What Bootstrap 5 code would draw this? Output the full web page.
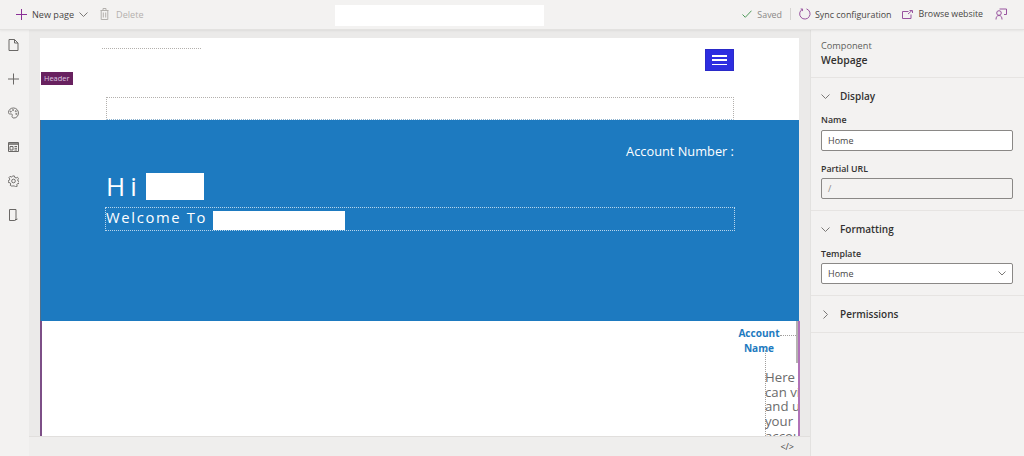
<!DOCTYPE html>
<html lang="en"><head><meta charset="utf-8"><title>Home</title>
<link href="https://cdn.jsdelivr.net/npm/bootstrap@5.3.0/dist/css/bootstrap.min.css" rel="stylesheet">
<style>
html,body{height:456px;overflow:hidden;margin:0}
body{font-family:"Open Sans","Noto Sans",sans-serif;background:#f3f2f1;color:#323130;font-size:10px}
svg{display:block;fill:none;stroke-width:1}
.topbar{height:30px;background:#f3f2f1;border-bottom:1px solid #e3e2e0;box-shadow:0 1px 2px rgba(0,0,0,.06);padding-left:16px;padding-right:17px;position:relative;z-index:2}
.tool{font-size:9.1px;color:#484644;white-space:nowrap}
.tool-r{font-size:8.9px}
.tool-b{font-size:8.8px}
.tool-off{color:#b3b0ad}
.tool-saved{color:#8a8886}
.g4{margin-left:4px}.g5{margin-left:5px}.g6{margin-left:6px}.g7{margin-left:7px}.g8{margin-left:8px}.g10{margin-left:10px}.g12{margin-left:12px}
.searchbox{width:209px;height:21px;background:#fff;position:absolute;left:335px;top:5px}
.sep{width:1px;height:12px;background:#d6d4d2;margin-left:8px;margin-right:8px}
.workarea{height:426px}
.rail{width:29px;flex:none;background:#f3f2f1;padding:8.5px 3px 0 0;gap:22px}
.rail svg{stroke:#6a6866}
.stage{width:781px;flex:none;background:#ebeae9;padding:8px 10px 0 11px}
.sitepage{height:398px;overflow:hidden;position:relative}
.sitehead{height:82px;position:relative;background:#fff;margin-right:1px}
.dots-a{position:absolute;left:62px;top:10px;width:99px;border-top:1px dotted #b3b0ad}
.burger{position:absolute;left:665px;top:11px;width:29px;height:22px;background:#2d2de0;border:1px solid #2a2ac8;padding:5px 6px;display:flex;flex-direction:column;justify-content:space-between}
.burger i{display:block;height:1.5px;background:#fff}
.tag{position:absolute;left:1px;top:34px;background:#68215f;color:#dcc5e0;font-size:7.4px;line-height:13px;padding:0 3px;width:32px;white-space:nowrap}
.dots-b{position:absolute;left:66px;top:59px;width:628px;height:23px;border:1px dotted #b3b0ad;border-bottom-color:#8fb4d0}
.hero{height:201px;background:#1d7ac0;color:#fff;padding:0 64px 0 64px;border-left:1px solid #4f6f8c;margin-right:1px}
.acct{font-size:12.8px;text-align:right;padding-top:22px;padding-right:1px;line-height:18px}
.hi{font-size:26px;letter-spacing:5px;line-height:27px;margin-top:13px;padding-left:1px;gap:4px}
.hi b{font-weight:400}
.mask-a{width:58px;height:27px;background:#fff}
.welcome{height:24px;border:1px dotted #b9d6ec;margin-top:7px;font-size:14.8px;letter-spacing:1.65px;line-height:19px;gap:6px}
.mask-b{width:132px;height:19px;background:#fff;margin-top:3px}
.lower{height:115px;position:relative;background:#fff;border-left:2px solid #7d4f87;border-right:2px solid #b173b8;overflow:hidden}
.acname{position:absolute;left:684px;top:5px;width:66px;text-align:center;color:#1d7ac0;font-weight:700;font-size:10.1px;line-height:14.7px}
.dots-c{position:absolute;left:738px;top:14px;width:18px;border-top:1px dotted #a19f9d}
.dots-d{position:absolute;left:723px;top:29px;height:90px;border-left:1px dotted #a19f9d}
.scroller{position:absolute;left:754px;top:0;width:2px;height:42px;background:#b5b3b1}
.herey{position:absolute;left:723px;top:49px;width:33px;overflow:hidden;white-space:nowrap;color:#6b6b6b;font-size:13.2px;line-height:14.7px}
.statusbar{height:20px;width:781px;position:absolute;left:29px;top:436px;background:#efeeed;border-top:1px solid #e1dfdd;color:#484644;font-size:9px;text-align:right;padding-right:16px;line-height:19px}
.panel{flex:1;background:#f3f2f1;border-left:1px solid #e3e2e0}
.pan-sec{border-bottom:1px solid #e6e4e2}
.pan-id{height:48px;padding:8px 10px 0;font-size:9.2px;line-height:15px;color:#605e5c}
.pan-id strong{display:block;color:#323130;font-size:10.4px;font-weight:600}
.pan-h{font-size:10px;font-weight:600;gap:10px;padding-left:10px;line-height:15px}
.pan-h svg{stroke:#7a7876}
.pan-l{font-size:8.8px;font-weight:600;line-height:13px;padding-left:10px;color:#323130}
.pan-in{margin:3px 10px 0 10px;height:21px;width:192px;background:#fff;border:1px solid #8a8886;border-radius:2px;font-size:9px;line-height:20px;padding:0 6px;color:#484644}
.pan-dis{background:#f3f2f1;color:#8a8886;margin-top:2.5px}
.pan-sel{margin-top:2px}
.lab-a{margin-top:10px}.lab-b{margin-top:11.5px}.lab-c{margin-top:11px}
.sec-disp{height:133px;padding-top:11px}
.sec-fmt{height:85px;padding-top:11px}
.sec-perm{height:37px;padding-top:11px}
</style></head><body>
<div class="topbar d-flex align-items-center justify-content-between">
  <div class="d-flex align-items-center">
    <svg width="11" height="11" viewBox="0 0 11 11" stroke="#8a2f96"><path d="M5.500 0v11M0 5.500h11"/></svg>
    <span class="tool g5">New page</span>
    <svg class="g5" width="9" height="5" viewBox="0 0 9 5" stroke="#7a7876"><path d="M.5.500l4 4 4-4"/></svg>
    <svg class="g12" width="9" height="12" viewBox="0 0 9 12" stroke="#b3b0ad"><path d="M.5 2.500h8M3 2.500v-2h3v2M1.200 2.500v9h6.600v-9M3.300 4.500v5M5.700 4.500v5"/></svg>
    <span class="tool tool-off g7">Delete</span>
  </div>
  <div class="searchbox"></div>
  <div class="d-flex align-items-center">
    <svg width="10" height="8" viewBox="0 0 10 8" stroke="#4f9a5a"><path d="M.5 4.500l2.800 2.800L9.500.7"/></svg>
    <span class="tool tool-r tool-saved g5">Saved</span>
    <span class="sep"></span>
    <svg width="12" height="12" viewBox="0 0 12 12" stroke="#98549f"><path d="M3.500 1.200A5.200 5.200 0 1 0 7.500.9M1.700.9l1.900.300-.3 1.900"/></svg>
    <span class="tool tool-r g4">Sync configuration</span>
    <svg class="g10" width="11" height="9" viewBox="0 0 11 9" stroke="#98549f"><path d="M6.500 1.500H.5v7h8.500V4.500M6 4l4-3.500M7.500.5H10.500V3"/></svg>
    <span class="tool tool-b g6">Browse website</span>
    <svg class="g12" width="12" height="12" viewBox="0 0 12 12" stroke="#98549f"><path d="M4.500 1h7v5.500H9M1 11.500c0-2.500 1-4 3-4s3 1.500 3 4"/><circle cx="4" cy="5" r="2.300"/></svg>
  </div>
</div>
<div class="workarea d-flex">
  <div class="rail d-flex flex-column align-items-center">
    <svg width="11" height="12" viewBox="0 0 11 12"><path d="M1 .5h5.500l3.500 3.500v7.500H1zM6.500 .5v3.500h3.500"/></svg>
    <svg width="11" height="12" viewBox="0 0 11 12"><path d="M5.500.500v11M0 6h11"/></svg>
    <svg width="11" height="12" viewBox="0 0 12 12"><path d="M6 .5C2.500.5.500 3 .5 5.500c0 1.800 1.800 1.600 3 1.600 1.300 0 1.600 1 1 2-.5 1 .4 2.400 1.900 2.400 3 0 5-2.500 5-5.500S9 .5 6 .5z"/><circle cx="3" cy="4.500" r=".6"/><circle cx="5.500" cy="2.800" r=".6"/><circle cx="8.500" cy="4" r=".6"/><circle cx="9" cy="7" r=".6"/></svg>
    <svg width="11" height="12" viewBox="0 0 11 12"><path d="M.5 1.500h10v9H.5z"/><path d="M1 2h9v2H1z" fill="#8a8886" stroke="none"/><path d="M2 5.500h3v3.500H2zM6.500 5.500h2.500M6.500 7.300h2.500M6.500 9h2.500"/></svg>
    <svg width="11" height="12" viewBox="0 0 12 12"><circle cx="6" cy="6" r="2"/><path d="M5 .5h2l.4 1.600 1.500.6 1.400-.8 1.200 1.500-.9 1.400.3 1.300 1.500.7-.4 1.900-1.700.2-.8 1.300.6 1.500-1.700.9-1.200-1.200H5.300L4.100 11.600l-1.700-.9.6-1.500-.8-1.300L.5 7.700.1 5.800l1.500-.7.300-1.300L1 2.400l1.200-1.500 1.400.8 1.100-.6z"/></svg>
    <svg width="9" height="12" viewBox="0 0 9 12"><path d="M.5.500h6.500v9.500L5.500 11.500H.5zM5.500 11.500l3-1.500"/></svg>
  </div>
  <div class="stage">
    <div class="sitepage">
      <div class="sitehead">
        <div class="dots-a"></div>
        <div class="burger"><i></i><i></i><i></i></div>
        <div class="tag">Header</div>
        <div class="dots-b"></div>
      </div>
      <div class="hero">
        <div class="acct">Account Number :</div>
        <div class="hi d-flex"><b>Hi</b><span class="mask-a"></span></div>
        <div class="welcome d-flex"><span>Welcome To</span><span class="mask-b"></span></div>
      </div>
      <div class="lower">
        <div class="acname">Account<br>Name</div>
        <div class="dots-c"></div><div class="dots-d"></div><div class="scroller"></div>
        <div class="herey">Here you<br>can view<br>and upd<br>your<br>account</div>
      </div>
    </div>
  </div>
  <div class="panel">
    <div class="pan-sec pan-id">Component<strong>Webpage</strong></div>
    <div class="pan-sec sec-disp">
      <div class="pan-h d-flex align-items-center"><svg width="9" height="5" viewBox="0 0 9 5"><path d="M.5.500l4 4 4-4"/></svg>Display</div>
      <div class="pan-l lab-a">Name</div><div class="pan-in">Home</div>
      <div class="pan-l lab-b">Partial URL</div><div class="pan-in pan-dis">/</div>
    </div>
    <div class="pan-sec sec-fmt">
      <div class="pan-h d-flex align-items-center"><svg width="9" height="5" viewBox="0 0 9 5"><path d="M.5.500l4 4 4-4"/></svg>Formatting</div>
      <div class="pan-l lab-c">Template</div>
      <div class="pan-in pan-sel d-flex align-items-center justify-content-between">Home<svg width="8" height="5" viewBox="0 0 8 5" stroke="#7a7876"><path d="M.5.500L4 4 7.500.5"/></svg></div>
    </div>
    <div class="pan-sec sec-perm">
      <div class="pan-h d-flex align-items-center"><svg width="9" height="9" viewBox="0 0 6 9"><path d="M1 .5l4 4-4 4"/></svg>Permissions</div>
    </div>
  </div>
</div>
<div class="statusbar">&lt;/&gt;</div>
<script src="https://cdn.jsdelivr.net/npm/bootstrap@5.3.0/dist/js/bootstrap.bundle.min.js"></script>
</body></html>
